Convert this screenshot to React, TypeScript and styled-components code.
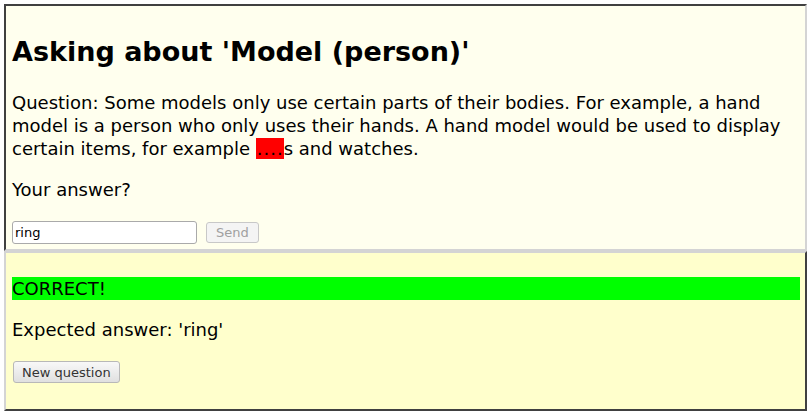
import React from "react";
import styled, { createGlobalStyle } from "styled-components";

const Global = createGlobalStyle`
  html, body { margin: 0; padding: 0; background: #ffffff; }
  body { padding: 4px 3px 4px 4px; font-family: "DejaVu Sans", Verdana, sans-serif; color: #000; }
`;

const Panel = styled.div<{ $variant: "question" | "result" }>`
  border: 2px solid;
  border-color: ${(p) =>
    p.$variant === "question"
      ? "#404040 #d4d4d4 #d4d4d4 #404040"
      : "#d4d4d4 #404040 #404040 #d4d4d4"};
  background: ${(p) => (p.$variant === "question" ? "#ffffee" : "#ffffcc")};
  padding: ${(p) => (p.$variant === "question" ? "0 5px 5px 6px" : "0 5px 26px 6px")};
  overflow: hidden;
`;

const Title = styled.h1`
  font-size: 27px;
  font-weight: bold;
  margin: 30px 0 23px;
  line-height: 32px;
`;

const Para = styled.p<{ $gap?: number }>`
  font-size: 18px;
  line-height: 23px;
  margin: 0 0 ${(p) => p.$gap ?? 18}px;
`;

const Blank = styled.span`
  background: #ff0000;
  letter-spacing: 1px;
  padding-left: 1px;
`;

const Row = styled.div`
  display: flex;
  align-items: center;
  gap: 8px;
`;

const Input = styled.input`
  width: 185px;
  height: 23px;
  box-sizing: border-box;
  border: 1px solid #aaaaaa;
  border-radius: 3px;
  font-family: "DejaVu Sans", sans-serif;
  font-size: 13px;
  padding: 0 2px;
  background: #fff;
  outline: none;
`;

const Button = styled.button`
  height: 22px;
  box-sizing: border-box;
  border: 1px solid #b8b8b8;
  border-radius: 3px;
  background: linear-gradient(#f8f8f8, #e0e0e0);
  font-family: "DejaVu Sans", sans-serif;
  font-size: 13px;
  color: #333;
  padding: 0 8px;
  margin-left: 1px;
  &:disabled {
    color: #a0a0a0;
    background: #f4f4f4;
    border-color: #c8c8c8;
    height: 21px;
    padding: 0 9px;
  }
`;

const Banner = styled.div`
  background: #00ff00;
  font-size: 18px;
  line-height: 23px;
  margin: 24px 0 18px;
`;

export default function App() {
  return (
    <>
      <Global />
      <Panel $variant="question">
        <Title>Asking about 'Model (person)'</Title>
        <Para>
          Question: Some models only use certain parts of their bodies. For example, a hand
          model is a person who only uses their hands. A hand model would be used to display
          certain items, for example <Blank>....</Blank>s and watches.
        </Para>
        <Para $gap={20}>Your answer?</Para>
        <Row>
          <Input defaultValue="ring" />
          <Button disabled>Send</Button>
        </Row>
      </Panel>
      <Panel $variant="result">
        <Banner>CORRECT!</Banner>
        <Para $gap={20}>Expected answer: 'ring'</Para>
        <Row>
          <Button>New question</Button>
        </Row>
      </Panel>
    </>
  );
}
